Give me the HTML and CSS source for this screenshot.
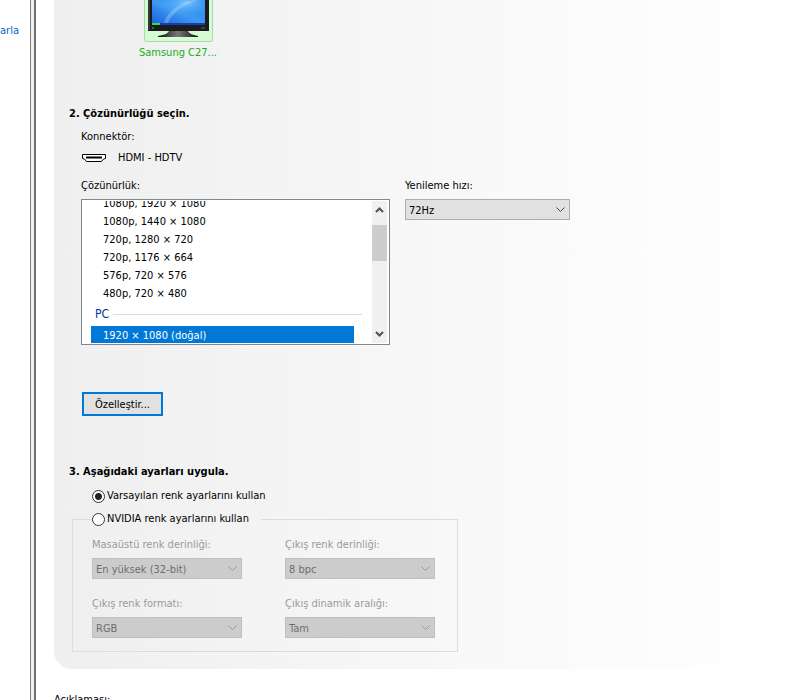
FILE: index.html
```
<!DOCTYPE html>
<html lang="tr">
<head>
  <meta charset="utf-8">
  <title>Çözünürlüğü Değiştir</title>
  <link rel="stylesheet" href="styles.css">
</head>
<body>
  <div class="window">
    <nav class="sidebar">
      <a href="#">arla</a>
    </nav>
    <div class="splitter"></div>

    <main class="content">
      <div class="panel">
        <div class="display">
          <svg class="monitor" width="69" height="42" viewBox="0 0 69 42" aria-hidden="true">
            <defs>
              <linearGradient id="screen" x1="0" y1="1" x2="1" y2="0">
                <stop offset="0" stop-color="#1660dc"/>
                <stop offset="0.5" stop-color="#3c98f2"/>
                <stop offset="1" stop-color="#1f86f0"/>
              </linearGradient>
              <radialGradient id="glow" cx="0.65" cy="0.1" r="0.6">
                <stop offset="0" stop-color="#8fd0ff" stop-opacity="0.8"/>
                <stop offset="1" stop-color="#4aa6f6" stop-opacity="0"/>
              </radialGradient>
              <linearGradient id="stand" x1="0" y1="0" x2="1" y2="0">
                <stop offset="0" stop-color="#111"/>
                <stop offset="0.5" stop-color="#777"/>
                <stop offset="1" stop-color="#111"/>
              </linearGradient>
            </defs>
            <path d="M0.500 0V39.500a2 2 0 0 0 2 2h64a2 2 0 0 0 2-2V0" fill="#d5fbd5" stroke="#a3dca3"/>
            <path d="M4 0h61v31H4z" fill="#1b1b1e"/>
            <path d="M5 0v30" stroke="#55555a"/>
            <path d="M8 0h53v25H8z" fill="url(#screen)"/>
            <path d="M8 0h53v25H8z" fill="url(#glow)"/>
            <path d="M20 23C23 12 34 3 50 0h4C39 5 28 13 24 23z" fill="#c4e6ff" opacity="0.3"/>
            <path d="M8 23h53v2H8z" fill="#163fae"/>
            <path d="M8 23h8v2H8z" fill="#3fd24c"/>
            <path d="M8 28h2" stroke="#35c43a"/>
            <path d="M57 28h4" stroke="#667"/>
            <path d="M25 31h19c1 2 4 4 10 5v1H14v-1c7-1 10-3 11-5z" fill="url(#stand)"/>
          </svg>
          <span class="display-name">Samsung C27...</span>
        </div>

        <section class="resolution">
          <h2>2. Çözünürlüğü seçin.</h2>
          <p class="connector-label">Konnektör:</p>
          <div class="connector">
            <svg width="24" height="8" viewBox="0 0 24 8" aria-hidden="true">
              <path d="M0.500 0.500h23v4l-2 0.500-2 2.500h-15l-2-2.500-2-0.500z" fill="#fff" stroke="#000"/>
              <path d="M4 3.500h16" stroke="#000" stroke-width="2"/>
            </svg>
            <span>HDMI - HDTV</span>
          </div>

          <div class="resolution-fields">
            <div class="field">
              <span id="resolution-label">Çözünürlük:</span>
              <div class="listbox">
                <ul role="listbox" aria-labelledby="resolution-label" tabindex="0">
                  <li role="option">1080p, 1920 × 1080</li>
                  <li role="option">1080p, 1440 × 1080</li>
                  <li role="option">720p, 1280 × 720</li>
                  <li role="option">720p, 1176 × 664</li>
                  <li role="option">576p, 720 × 576</li>
                  <li role="option">480p, 720 × 480</li>
                  <li class="group" role="presentation">PC</li>
                  <li class="selected" role="option" aria-selected="true">1920 × 1080 (doğal)</li>
                </ul>
                <div class="scrollbar">
                  <button type="button" aria-label="Yukarı">
                    <svg width="9" height="6" viewBox="0 0 9 6"><path d="M1 5l3.500-3.500L8 5" fill="none" stroke="#505050" stroke-width="2"/></svg>
                  </button>
                  <div class="thumb"></div>
                  <button type="button" aria-label="Aşağı">
                    <svg width="9" height="6" viewBox="0 0 9 6"><path d="M1 1l3.500 3.500L8 1" fill="none" stroke="#505050" stroke-width="2"/></svg>
                  </button>
                </div>
              </div>
            </div>
            <div class="field refresh">
              <label for="refresh-rate">Yenileme hızı:</label>
              <select id="refresh-rate">
                <option>72Hz</option>
              </select>
            </div>
          </div>

          <button class="customize" type="button">Özelleştir...</button>
        </section>

        <section class="color">
          <h2>3. Aşağıdaki ayarları uygula.</h2>
          <label class="radio default-color"><input type="radio" name="color" checked>Varsayılan renk ayarlarını kullan</label>
          <fieldset>
            <legend><label class="radio"><input type="radio" name="color">NVIDIA renk ayarlarını kullan</label></legend>
            <div class="color-fields">
              <div class="field">
                <label for="desktop-depth">Masaüstü renk derinliği:</label>
                <select id="desktop-depth" disabled><option>En yüksek (32-bit)</option></select>
              </div>
              <div class="field">
                <label for="output-depth">Çıkış renk derinliği:</label>
                <select id="output-depth" disabled><option>8 bpc</option></select>
              </div>
              <div class="field">
                <label for="output-format">Çıkış renk formatı:</label>
                <select id="output-format" disabled><option>RGB</option></select>
              </div>
              <div class="field">
                <label for="dynamic-range">Çıkış dinamik aralığı:</label>
                <select id="dynamic-range" disabled><option>Tam</option></select>
              </div>
            </div>
          </fieldset>
        </section>
      </div>
      <p class="description">Açıklaması:</p>
    </main>
  </div>
</body>
</html>
```

FILE: styles.css
```
* {
  box-sizing: border-box;
}

body {
  margin: 0;
  font-family: Tahoma, "DejaVu Sans Condensed", "Noto Sans", sans-serif;
  font-size: 11px;
  line-height: 14px;
  color: #000;
  background: #fff;
}

h2, p, ul {
  margin: 0;
  padding: 0;
}

h2 {
  font-size: 11px;
  line-height: 14px;
}

button, select {
  font: inherit;
  color: inherit;
}

.window {
  display: flex;
  height: 100vh;
  overflow: hidden;
}

.sidebar {
  flex: 0 0 30px;
  padding-top: 24px;
}

.sidebar a {
  color: #0066cc;
  text-decoration: none;
}

.splitter {
  flex: 0 0 6px;
  background: #f0f0f0;
  border-left: 1px solid #808080;
  border-right: 2px solid #6e6e6e;
}

.content {
  flex: 1;
  padding-left: 18px;
}

.panel {
  padding: 0 15px 17px;
  border-radius: 0 0 0 18px;
  background: linear-gradient(to right, #efefef, #fff 95%);
}

.display {
  display: flex;
  flex-direction: column;
  align-items: center;
  gap: 4px;
  width: 218px;
}

.display-name {
  color: #12b012;
}

.resolution {
  padding-top: 47px;
}

.connector-label {
  margin: 9px 0 7px 12px;
}

.connector {
  display: flex;
  align-items: center;
  gap: 12px;
  margin: 0 0 14px 13px;
}

.resolution-fields {
  display: flex;
  gap: 15px;
  margin-left: 12px;
}

.field {
  display: flex;
  flex-direction: column;
  gap: 6px;
}

.refresh {
  width: 165px;
}

.listbox {
  display: flex;
  width: 309px;
  height: 146px;
  padding: 1px 2px 1px 0;
  border: 1px solid #828790;
  background: #fff;
}

/* rows are anchored to the bottom, the ones above scroll out of view */
.listbox ul {
  flex: 1;
  display: flex;
  flex-direction: column;
  justify-content: flex-end;
  padding: 0 10px 0 9px;
  overflow: hidden;
  list-style: none;
}

.listbox li {
  flex: none;
  height: 18px;
  padding-left: 12px;
  margin-right: 8px;
  line-height: 20px;
}

.listbox .group {
  display: flex;
  align-items: center;
  gap: 4px;
  height: 24px;
  margin-right: 0;
  padding-left: 4px;
  font-size: 12px;
  color: #003399;
}

.listbox .group::after {
  content: "";
  flex: 1;
  border-top: 1px solid #dcdcdc;
}

.listbox .selected {
  height: 17px;
  line-height: 19px;
  color: #fff;
  background: #0078d7;
}

.scrollbar {
  display: flex;
  flex-direction: column;
  width: 15px;
  background: #f0f0f0;
}

.scrollbar button {
  display: flex;
  align-items: center;
  justify-content: center;
  height: 18px;
  padding: 0;
  border: none;
  background: none;
}

.scrollbar .thumb {
  height: 36px;
  margin: 6px 0 auto;
  background: #cdcdcd;
}

select {
  width: 100%;
  height: 21px;
  padding: 2px 20px 0 3px;
  border: 1px solid #adadad;
  border-radius: 0;
  appearance: none;
  background: #e1e1e1 url("data:image/svg+xml,%3Csvg xmlns='http://www.w3.org/2000/svg' width='9' height='6'%3E%3Cpath d='M.5 .5l4 4 4-4' fill='none' stroke='%23444'/%3E%3C/svg%3E") no-repeat right 4px center;
}

select:disabled {
  border-color: #bfbfbf;
  color: #6d6d6d;
  opacity: 1;
  background-color: #ccc;
  background-image: url("data:image/svg+xml,%3Csvg xmlns='http://www.w3.org/2000/svg' width='9' height='6'%3E%3Cpath d='M.5 .5l4 4 4-4' fill='none' stroke='%23999'/%3E%3C/svg%3E");
}

.customize {
  display: block;
  height: 24px;
  margin: 47px 0 0 13px;
  padding: 2px 11px 0;
  border: 2px solid #0078d7;
  background: #e1e1e1;
}

.color {
  padding-top: 49px;
}

.radio {
  display: flex;
  align-items: center;
  gap: 2px;
}

.radio input {
  width: 13px;
  height: 13px;
  margin: 0;
  border: 1px solid #333;
  border-radius: 50%;
  appearance: none;
  background: #fff;
}

.radio input:checked {
  background: radial-gradient(circle, #222 3px, #fff 4px);
}

.default-color {
  margin: 10px 0 9px 23px;
}

fieldset {
  width: 386px;
  margin: 0 0 0 3px;
  padding: 0 19px 13px;
  border: 1px solid #dcdcdc;
}

legend {
  padding: 0 12px 0 0;
}

.color-fields {
  display: grid;
  grid-template-columns: 150px 150px;
  gap: 18px 43px;
  padding-top: 12px;
  color: #9a9a9a;
}

.description {
  padding-top: 24px;
}
```
